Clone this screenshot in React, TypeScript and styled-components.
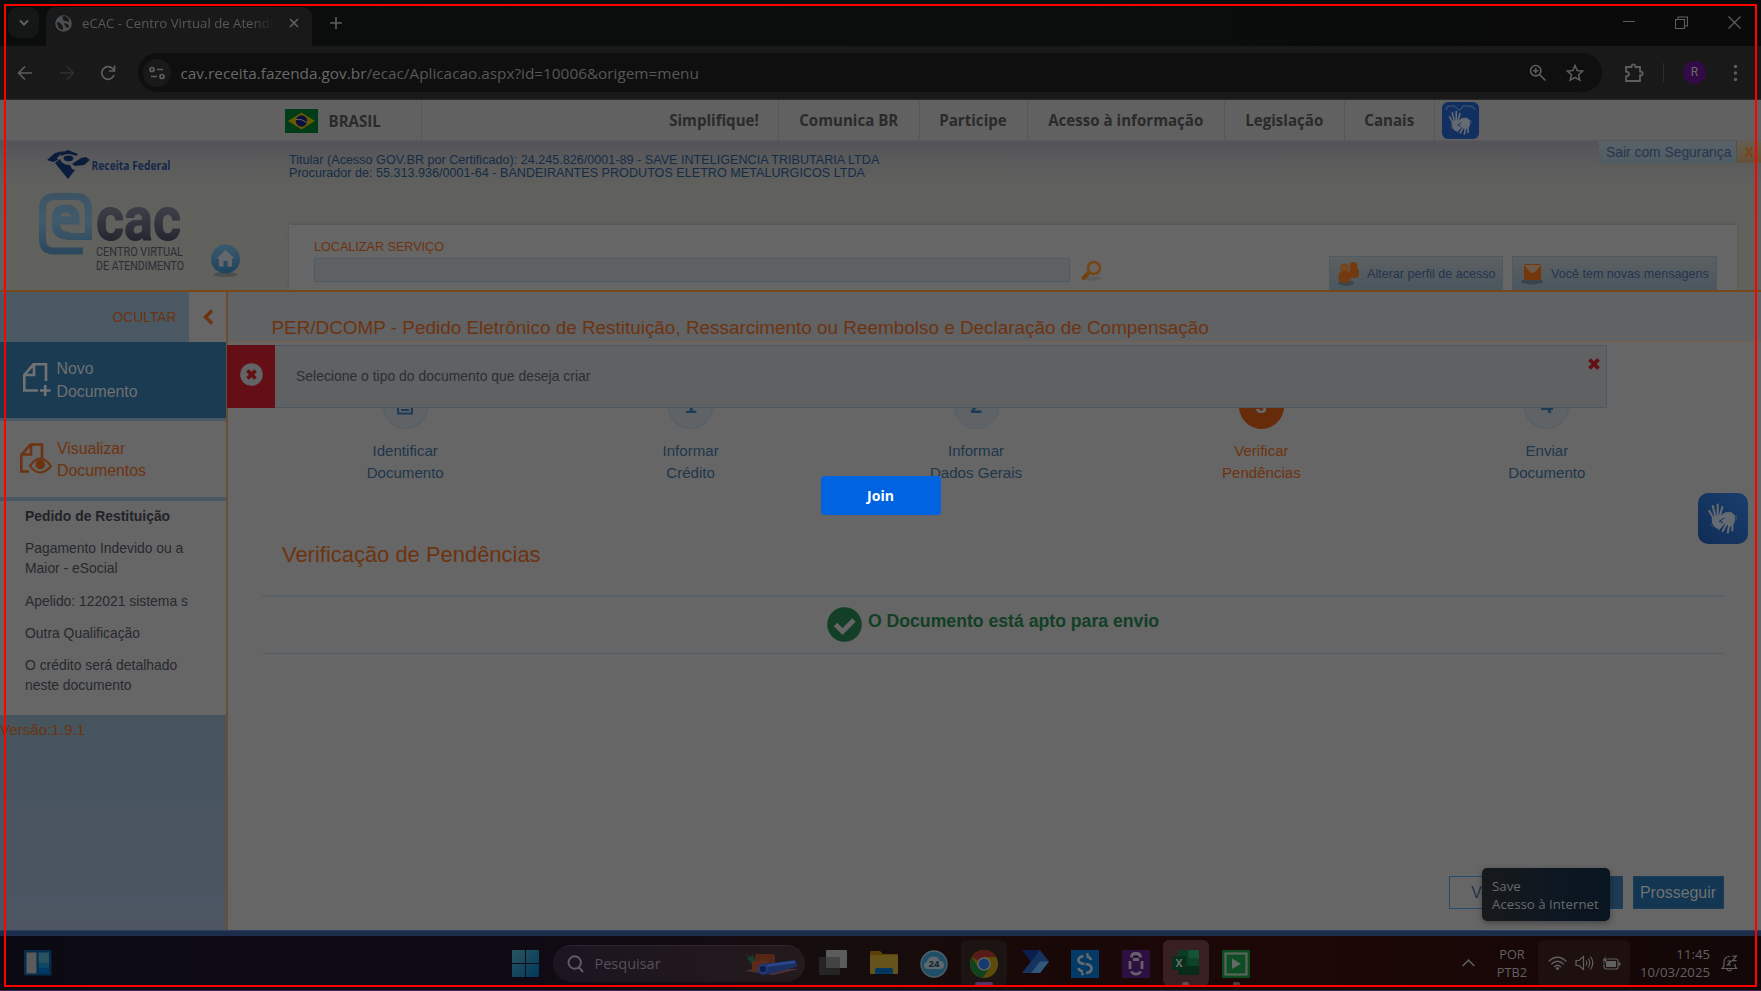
import React from "react";
import styled, { createGlobalStyle } from "styled-components";

const arial = `"Liberation Sans", Arial, sans-serif`;
const segoe = `"Open Sans", "Segoe UI", sans-serif`;
const orange = "#6d3310";

const GlobalStyle = createGlobalStyle`
  * { box-sizing: border-box; }
  body { margin: 0; background: #666; overflow: hidden; }
  p, h1, h2 { margin: 0; font-weight: normal; }
  button { font: inherit; margin: 0; padding: 0; border: 0; }
  svg { display: block; flex: none; }
`;

const Screen = styled.div`
  position: relative;
  width: 1761px;
  height: 991px;
  display: flex;
  flex-direction: column;
  overflow: hidden;
  font-family: ${arial};
  background: #666;
`;

/* ---------- browser ---------- */
const TitleBar = styled.div`
  height: 46px;
  flex: none;
  display: flex;
  align-items: flex-start;
  padding-left: 8px;
  background: linear-gradient(90deg, #0b0d0d, #0a0e0c 60%, #0a0a0b 90%);
`;
const TabMenu = styled.div`
  width: 31px;
  height: 31px;
  margin-top: 7px;
  border-radius: 10px;
  background: #151716;
  display: grid;
  place-items: center;
`;
const Tab = styled.div`
  width: 266px;
  height: 39px;
  margin: 7px 0 0 7px;
  padding: 0 0 7px 9px;
  border-radius: 10px 10px 0 0;
  background: #191919;
  display: flex;
  align-items: center;
`;
const TabTitle = styled.span`
  width: 192px;
  margin-left: 10px;
  overflow: hidden;
  white-space: nowrap;
  font: 13.2px/20px ${segoe};
  color: #585858;
  mask-image: linear-gradient(90deg, #000 88%, transparent);
`;
const TabAction = styled.div<{ $ml: number; $mt?: number }>`
  margin-left: ${(p) => p.$ml}px;
  margin-top: ${(p) => p.$mt ?? 0}px;
`;
const WindowControls = styled.div`
  margin: 16px 20px 0 auto;
  width: 118px;
  display: flex;
  justify-content: space-between;
  align-items: center;
`;
const Toolbar = styled.div`
  height: 54px;
  flex: none;
  display: flex;
  align-items: center;
  padding-left: 16px;
  background: #191919;
  border-bottom: 1px solid #2a2a2a;
`;
const NavIcons = styled.div`
  width: 122px;
  display: flex;
  gap: 23.5px;
`;
const Omnibox = styled.div`
  width: 1464px;
  height: 39px;
  border-radius: 20px;
  background: #0f0f0f;
  display: flex;
  align-items: center;
  padding: 0 18px 0 5px;
`;
const SiteInfo = styled.div`
  width: 28px;
  height: 28px;
  border-radius: 50%;
  background: #191919;
  display: grid;
  place-items: center;
`;
const Url = styled.span`
  margin-left: 9.5px;
  flex: 1;
  font: 15.33px/22px ${segoe};
  color: #575757;
  b { font-weight: 400; color: #686868; }
`;
const OmniActions = styled.div`
  display: flex;
  gap: 19px;
`;
const ToolbarEnd = styled.div`
  margin-left: 22px;
  display: flex;
  align-items: center;
`;
const Divider = styled.i`
  width: 1px;
  height: 19px;
  margin: 0 19px 0 19px;
  background: #2c2c2c;
`;
const Avatar = styled.span`
  width: 23px;
  height: 23px;
  border-radius: 50%;
  background: #320a45;
  color: #6a6a6a;
  font: 12px/23px Roboto, sans-serif;
  text-align: center;
  margin-right: 27px;
`;

/* ---------- gov bar ---------- */
const GovBar = styled.div`
  height: 41px;
  flex: none;
  display: flex;
  align-items: center;
  padding-left: 285px;
  background: #616161;
  border-bottom: 1px solid #5a5a5c;
  font: bold 15.1px/22px ${segoe};
  color: #2a2a2a;
`;
const GovBrand = styled.div`
  width: 137px;
  height: 40px;
  padding-top: 1px;
  display: flex;
  align-items: center;
  gap: 10.5px;
  border-right: 1px solid #55575a;
`;
const GovItem = styled.a<{ $w: number; $first?: boolean }>`
  width: ${(p) => p.$w}px;
  height: 40px;
  line-height: 40px;
  margin-left: ${(p) => (p.$first ? "auto" : 0)};
  text-align: center;
  border-right: 1px solid #55575a;
`;
const GovLibras = styled.div`
  width: 37px;
  height: 37px;
  margin: 0 282px 0 7px;
  border-radius: 6px;
  background: #12305f;
  display: grid;
  place-items: center;
`;

/* ---------- page header ---------- */
const Header = styled.header`
  height: 151px;
  flex: none;
  display: flex;
  background: linear-gradient(#545459, #5b5b5c 20px, #60605d 44px, #61615d);
  border-bottom: 2px solid #77481a;
`;
const Brand = styled.div`
  width: 289px;
  flex: none;
`;
const HeaderBody = styled.div`
  flex: 1;
  display: flex;
  flex-direction: column;
  justify-content: space-between;
`;
const HeaderTop = styled.div`
  display: flex;
  justify-content: space-between;
`;
const UserInfo = styled.p`
  padding-top: 13px;
  font-size: 12.62px;
  line-height: 12.9px;
  color: #152c47;
`;
const Logout = styled.div`
  display: flex;
  height: 22px;
  font-size: 13.85px;
  line-height: 23px;
  color: #26354f;
`;
const LogoutText = styled.span`
  width: 138px;
  padding-left: 7px;
  background: linear-gradient(#5a6268, #4f5b63);
  border-right: 1px solid #46525c;
`;
const LogoutX = styled.span`
  width: 24px;
  background: linear-gradient(#65604f, #665038);
  color: #7a4312;
  font-weight: bold;
  text-align: center;
`;
const SearchPanel = styled.div`
  width: 1448px;
  height: 65px;
  background: #666;
  box-shadow: 0 -1px 3px rgba(0, 0, 0, 0.12);
  display: flex;
  justify-content: space-between;
  align-items: flex-end;
  padding: 0 20px 0 25px;
`;
const SearchField = styled.label`
  display: block;
  height: 50px;
  font-size: 12.6px;
  line-height: 14px;
  padding-bottom: 8px;
  color: ${orange};
`;
const SearchRow = styled.div`
  display: flex;
  align-items: center;
  gap: 11px;
  margin-top: 4px;
`;
const SearchInput = styled.div`
  width: 755.5px;
  height: 24px;
  background: #606163;
  border: 1px solid #4d5963;
`;
const Shortcuts = styled.div`
  display: flex;
  gap: 9px;
`;
const Shortcut = styled.div<{ $w: number; $gap: number }>`
  width: ${(p) => p.$w}px;
  height: 34px;
  padding-left: 7px;
  display: flex;
  align-items: center;
  gap: ${(p) => p.$gap}px;
  background: linear-gradient(#5c6061, #4b565f);
  border: 1px solid #4d5a5f;
  border-bottom: 0;
  font-size: 12.57px;
  white-space: nowrap;
  color: #24344f;
`;

/* ---------- body ---------- */
const Body = styled.div`
  height: 638px;
  flex: none;
  display: flex;
`;
const Sidebar = styled.aside`
  width: 228px;
  flex: none;
  border-right: 2px solid #674e34;
  background: linear-gradient(#4a5963, #46545e 70%, #4d5563);
  display: flex;
  flex-direction: column;
`;
const HideRow = styled.div`
  height: 50px;
  display: flex;
  justify-content: flex-end;
  font-size: 13.82px;
  line-height: 50px;
  color: ${orange};
`;
const HideArrow = styled.div`
  width: 37px;
  margin-left: 12.5px;
  background: #666;
  display: grid;
  place-items: center;
`;
const MenuItem = styled.div<{ $primary?: boolean; $pl: number; $lh: number }>`
  height: 76px;
  display: flex;
  align-items: center;
  padding-left: ${(p) => p.$pl}px;
  background: ${(p) => (p.$primary ? "#1a3b52" : "#666")};
  color: ${(p) => (p.$primary ? "#6f7173" : orange)};
  font-size: 15.85px;
  line-height: ${(p) => p.$lh}px;
  span { padding: 2px 0 0 5.5px; }
`;
const Gap = styled.div<{ $h: number }>`
  height: ${(p) => p.$h}px;
`;
const Summary = styled.div`
  height: 214px;
  padding: 6px 0 0 25px;
  background: #666;
  font-size: 13.9px;
  line-height: 19.9px;
  color: #27292e;
  p { margin-bottom: 12.4px; }
  p.bold { font-weight: bold; color: #212329; }
`;
const Version = styled.p`
  padding-top: 6px;
  font-size: 15.15px;
  line-height: 17px;
  color: ${orange};
`;
const Main = styled.main`
  position: relative;
  flex: 1;
  background: #666;
`;
const PageTitle = styled.h1`
  height: 50px;
  padding: 21px 0 0 43.5px;
  font-size: 18.9px;
  line-height: 29px;
  color: ${orange};
  background: #616264;
  border-bottom: 1px solid #77604e;
`;
const Alert = styled.div`
  position: absolute;
  top: 53px;
  left: -1px;
  width: 1380px;
  height: 63px;
  display: flex;
  align-items: center;
  background: #5f6163;
  border: 1px solid #4d5860;
  font-size: 13.95px;
  color: #2c2e33;
`;
const AlertText = styled.span`
  padding-bottom: 2px;
`;
const AlertBadge = styled.div`
  width: 48px;
  height: 63px;
  margin: 0 21px 0 -1px;
  background: #630f15;
  display: grid;
  place-items: center;
  padding-bottom: 4px;
`;
const AlertClose = styled.div`
  margin: 0 6px 26px auto;
`;
const Steps = styled.ol`
  list-style: none;
  display: flex;
  width: 1427px;
  margin: 42px 0 0 34.5px;
  padding: 0;
`;
const Step = styled.li<{ $active?: boolean }>`
  flex: 1;
  display: flex;
  flex-direction: column;
  align-items: center;
  text-align: center;
  font-size: 15.07px;
  line-height: 22.2px;
  color: ${(p) => (p.$active ? orange : "#20364b")};
`;
const StepCircle = styled.span<{ $active?: boolean }>`
  width: 45px;
  height: 45px;
  margin-bottom: 11px;
  border-radius: 50%;
  display: grid;
  place-items: center;
  background: ${(p) => (p.$active ? "#662c09" : "#606366")};
  border: 1px solid ${(p) => (p.$active ? "#662c09" : "#545e68")};
  color: ${(p) => (p.$active ? "#686868" : "#1d3a56")};
  font-weight: bold;
  font-size: ${(p) => (p.$active ? 20 : 22)}px;
`;
const SectionTitle = styled.h2`
  margin: 56px 0 0 54px;
  font-size: 21.95px;
  line-height: 30px;
  color: ${orange};
`;
const Result = styled.div`
  width: 1462px;
  height: 59px;
  margin: 24.5px 0 0 34px;
  border-top: 2px solid #596066;
  border-bottom: 1px solid #515c66;
  display: flex;
  align-items: center;
  justify-content: center;
  gap: 6px;
  font-weight: bold;
  font-size: 17.65px;
  color: #123f25;
  svg { margin-bottom: 1px; }
  span { padding-bottom: 6px; }
`;
const FormActions = styled.div`
  display: flex;
  gap: 10px;
  margin: 222px 0 0 1220.5px;
`;
const FormButton = styled.button<{ $w: number; $kind: "outline" | "soft" | "solid" }>`
  width: ${(p) => p.$w}px;
  height: 33px;
  border: 1px solid ${(p) => (p.$kind === "outline" ? "#234c6e" : "#1c3d58")};
  background: ${(p) => ({ outline: "#666", soft: "#1e3a52", solid: "#133752" })[p.$kind]};
  color: ${(p) => (p.$kind === "outline" ? "#1f3350" : "#6f7173")};
  font: 15.9px/29px ${arial};
`;
const FloatingLibras = styled.div`
  position: absolute;
  left: 1698px;
  top: 493px;
  width: 50px;
  height: 51px;
  border-radius: 10px;
  background: linear-gradient(45deg, #0f2c55, #1a3e6d);
`;
const NetTooltip = styled.div`
  position: absolute;
  left: 1482px;
  top: 868px;
  width: 128px;
  height: 53px;
  padding: 9px 0 0 10px;
  border-radius: 5px;
  background: linear-gradient(90deg, #17191b, #0d1722 60%, #091521);
  box-shadow: 0 2px 6px rgba(0, 0, 0, 0.35);
  font: 13.25px/18.2px ${segoe};
  color: #686a6c;
  white-space: nowrap;
`;

/* ---------- taskbar ---------- */
const WindowEdge = styled.div`
  height: 6px;
  flex: none;
  background: #1b2d4b;
  border-top: 1px solid #2c4160;
`;
const Taskbar = styled.footer`
  height: 55px;
  flex: none;
  display: flex;
  align-items: center;
  padding: 0 23px 0 24px;
  border-bottom: 1px solid #38284c;
  background: linear-gradient(90deg, #0b0a12, #100a14 30%, #160d0d 48%, #1a0707 62%, #1b0806 78%, #120707);
  color: #636163;
  font-family: ${segoe};
`;
const TaskSearch = styled.div`
  width: 252px;
  height: 37px;
  margin: 0 3.5px 0 14px;
  padding: 0 6px 0 14px;
  border-radius: 19px;
  background: linear-gradient(90deg, #1c1420, #241a1c);
  border-top: 1px solid #2e2730;
  display: flex;
  align-items: center;
  font-size: 14.5px;
  color: #56505a;
  span { margin: 0 auto 0 11px; }
`;
const Slot = styled.div`
  width: 50.4px;
  display: flex;
  justify-content: center;
`;
const SlotBox = styled.div<{ $bg?: string }>`
  width: 46px;
  height: 46px;
  border-radius: 6px;
  background: ${(p) => p.$bg ?? "transparent"};
  display: flex;
  flex-direction: column;
  align-items: center;
  justify-content: space-between;
  padding-top: 9.5px;
`;
const Indicator = styled.i<{ $w: number; $c: string }>`
  width: ${(p) => p.$w}px;
  height: 4px;
  border-radius: 2px;
  background: ${(p) => p.$c};
`;
const Tray = styled.div`
  margin-left: auto;
  display: flex;
  align-items: center;
  font-size: 13px;
  line-height: 18.2px;
`;
const TrayText = styled.div<{ $w: number; $right?: boolean; $size: number }>`
  width: ${(p) => p.$w}px;
  text-align: ${(p) => (p.$right ? "right" : "center")};
  font-size: ${(p) => p.$size}px;
`;
const TrayGroup = styled.div`
  width: 92px;
  height: 46px;
  margin: 0 0 0 8px;
  border-radius: 6px;
  background: #1d100f;
  display: flex;
  align-items: center;
  justify-content: center;
  gap: 8px;
`;

/* ---------- session layer ---------- */
const SessionLayer = styled.div`
  position: absolute;
  inset: 4px;
  border: 2px solid #f00;
  display: flex;
  align-items: center;
  justify-content: center;
`;
const JoinButton = styled.button`
  width: 120px;
  height: 39px;
  border-radius: 4px;
  background: #0064e1;
  color: #fff;
  font: bold 14.1px/39px ${segoe};
`;

const Line = ({ w = 16, h = 16, d, c = "#5e5e5e", s = 1.6 }: { w?: number; h?: number; d: string; c?: string; s?: number }) => (
  <svg width={w} height={h} viewBox={`0 0 ${w} ${h}`} fill="none" stroke={c} strokeWidth={s}>
    <path d={d} />
  </svg>
);

const Hands = ({ size = 51, c = "#656b72" }: { size?: number; c?: string }) => (
  <svg width={size} height={size} viewBox="0 0 51 51" stroke={c} fill={c} strokeLinecap="round" strokeLinejoin="round">
    <path d="M14.5 25l4-2 4 4 3.5 1-4 6-4 1-3-4z" strokeWidth="1" />
    <path d="M16 26L11.3 18M17.5 24L14.8 13M19.7 24V11.5M21.5 24.5L24.3 14" fill="none" strokeWidth="2.1" />
    <path d="M22.5 23l5-3.3h6l3.3 3-.6 6.8-3.7 3.5-6-2.5-2-3.8-3-1z" strokeWidth="1" />
    <path d="M27 29l-6.3 7M29 30l-4.3 8M31.5 30.5L29.8 39.5M34.5 29.5L34.3 37.5M28 25.5l-6.5 1" fill="none" strokeWidth="2.1" />
    <path d="M38.2 22.5v4M13 31l2 2.5" fill="none" strokeWidth="0.8" opacity=".7" />
    <path d="M25.8 25.3l-4.5 3 3.500 1.500" fill="none" stroke="#12305c" strokeWidth="1" />
  </svg>
);

const GovHands = () => (
  <svg width="37" height="37" viewBox="0 0 37 37">
    <path d="M4 8q0-4 4-4h4.500l4 4 2.500-1 2-3h6q5 0 6 4" fill="none" stroke="#46597a" strokeWidth="1" />
    <g transform="translate(-1.500 .5) scale(.8)"><Hands /></g>
  </svg>
);

const BrandLogo = () => (
  <svg width="289" height="149" viewBox="0 141 289 149">
    <defs>
      <linearGradient id="at" gradientUnits="userSpaceOnUse" x1="0" y1="192" x2="0" y2="255">
        <stop offset="0" stopColor="#3b5263" />
        <stop offset=".45" stopColor="#415b6d" />
        <stop offset="1" stopColor="#2a465a" />
      </linearGradient>
      <linearGradient id="cac" x1="0" y1="0" x2="0" y2="1">
        <stop offset=".4" stopColor="#3b3d46" />
        <stop offset=".65" stopColor="#2e303a" />
        <stop offset=".85" stopColor="#1f212b" />
      </linearGradient>
      <linearGradient id="home" x1="0" y1="0" x2="0" y2="1">
        <stop offset="0" stopColor="#3b5a6e" />
        <stop offset="1" stopColor="#1f435c" />
      </linearGradient>
    </defs>
    <g fill="#0a1c3c">
      <path d="M47 160l8-7 9-2-4 4-3 3 1 2-5 2z" />
      <path d="M61 153l7-3 10 4-2 2q-8-4-15 0z" />
      <ellipse cx="68.5" cy="158.3" rx="4.8" ry="2.9" />
      <path d="M72 164l9-6 5-1 4 3-6 5-9 1z" />
      <path d="M55 163l5-4q2 6 10 6l2 4 3 1-7 9z" />
    </g>
    <text x="91.5" y="169.500" fontFamily="Open Sans" fontWeight="bold" fontSize="13" textLength="79" lengthAdjust="spacingAndGlyphs" fill="#15274a">Receita Federal</text>
    <g fill="none" stroke="url(#at)" strokeWidth="7">
      <path d="M83 251H54q-11.500 0-11.500-11.500V209q0-12.500 13-12.500H75q13.500 0 13.500 13V236.500H68" />
      <path d="M70 236q-14 0-14-11V219q0-10.500 10-10.500 9.500 0 9.500 10.500v1.500H58" strokeWidth="8" />
    </g>
    <text x="96" y="240" fontFamily="Roboto" fontWeight="bold" fontSize="62" textLength="85" lengthAdjust="spacingAndGlyphs" fill="url(#cac)" stroke="url(#cac)" strokeWidth="1" strokeLinejoin="round">cac</text>
    <text x="96" y="256" fontFamily="Roboto" fontSize="12.500" textLength="87" lengthAdjust="spacingAndGlyphs" fill="#2b2d36">CENTRO VIRTUAL</text>
    <text x="96" y="269.700" fontFamily="Roboto" fontSize="12.500" textLength="88" lengthAdjust="spacingAndGlyphs" fill="#2b2d36">DE ATENDIMENTO</text>
    <ellipse cx="225.500" cy="274.500" rx="12" ry="2.500" fill="#4c4d4d" />
    <circle cx="225.500" cy="259" r="14.500" fill="url(#home)" />
    <path d="M216.500 258.500l9-8.500 9 8.500h-2.500v8h-4.500v-5.500h-4v5.500h-4.500v-8z" fill="#64686b" />
  </svg>
);

const Flag = () => (
  <svg width="33" height="24" viewBox="0 0 33 24">
    <rect width="33" height="24" fill="#003c18" />
    <path d="M3 12L16.500 3.500 30 12 16.500 20.500z" fill="#665a00" />
    <circle cx="16.500" cy="12" r="5.700" fill="#0d0f40" />
    <path d="M11 10.500q6-1 11 3" stroke="#666" fill="none" />
  </svg>
);

const DocIcon = ({ eye }: { eye?: boolean }) =>
  eye ? (
    <svg width="32" height="32" viewBox="20 443 32 32" fill="none" stroke={orange} strokeWidth="2.600">
      <path d="M42 458V444.500H30.500L21.300 455v16.500H29M31 445v9.500h-8.500" />
      <path d="M30 466q10-15 21 0-11 13-21 0z" fill="#666" strokeWidth="2" />
      <circle cx="40.300" cy="464.500" r="4.800" fill={orange} stroke="none" />
    </svg>
  ) : (
    <svg width="28" height="36" viewBox="23 362 28 36" fill="none" stroke="#707274" strokeWidth="2.600">
      <path d="M46 381V364.300H33.500L24.300 375v15.500H38M34 365v10h-8.500M45.200 385v11M40 390.500h10.500" />
    </svg>
  );

const People = () => (
  <svg width="24" height="26" viewBox="0 0 24 26" fill="#723a0e">
    <ellipse cx="9" cy="22" rx="8" ry="3" fill="#3c454d" />
    <circle cx="16.500" cy="5" r="4" />
    <rect x="12" y="7" width="10" height="10" rx="4" />
    <circle cx="7.500" cy="7" r="4.500" fill="#7a4414" />
    <rect x="1.500" y="10" width="12" height="12" rx="5" />
    <circle cx="7" cy="6.500" r="2" fill="#66503c" />
  </svg>
);
const Mail = () => (
  <svg width="24" height="22" viewBox="0 0 24 22">
    <ellipse cx="12" cy="18.500" rx="11" ry="3" fill="#39444e" />
    <rect x="4" y="1" width="17" height="16" rx="1.500" fill="#74370b" />
    <path d="M4 2h17l-6 7q-2.500 2-5 0z" fill="#6b5a4a" />
  </svg>
);
const Magnifier = () => (
  <svg width="21" height="21" viewBox="0 0 21 21" fill="none">
    <ellipse cx="11" cy="18.500" rx="9" ry="2" fill="#5b5b5b" />
    <path d="M8 12.500L2.500 18" stroke="#74400f" strokeWidth="4" strokeLinecap="round" />
    <circle cx="13" cy="8" r="6" stroke="#744616" strokeWidth="2.500" fill="#6b635a" />
  </svg>
);

const StartIcon = () => (
  <svg width="27" height="27" viewBox="0 0 27 27">
    <defs>
      <linearGradient id="win" x1="0" y1="0" x2="1" y2="1">
        <stop offset="0" stopColor="#2c5560" />
        <stop offset="1" stopColor="#00385c" />
      </linearGradient>
    </defs>
    <path d="M0 1q0-1 1-1h12v13H0zM14 0h12q1 0 1 1v12H14zM0 14h13v13H1q-1 0-1-1zM14 14h13v12q0 1-1 1H14z" fill="url(#win)" />
  </svg>
);
const Yoga = () => (
  <svg width="54" height="24" viewBox="0 0 54 24">
    <path d="M0 19l10-3 44 1-26 6z" fill="#4a3038" />
    <path d="M1 2l5 3 2-3 1 5 3 1-1 4-7-1 2-2-5-2 3-1z" fill="#16402e" />
    <rect x="10" y="2" width="20" height="10" rx="2" fill="#552717" />
    <rect x="7" y="9" width="16" height="10" rx="2" fill="#5b2c1b" />
    <path d="M16 12l34-4q3 3 1 7l-32 8q-6 0-6-5 0-4 3-6z" fill="#1a2f63" />
    <path d="M22 13.500l28-3.500" stroke="#2a488a" strokeWidth="2.500" />
    <circle cx="18" cy="17" r="4" fill="#0e1c48" stroke="#2c4688" />
  </svg>
);
const TaskView = () => (
  <svg width="28" height="26" viewBox="0 0 28 26">
    <rect x="0" y="7" width="21" height="18" rx="1" fill="#252424" />
    <rect x="7" y="0" width="21" height="18" rx="1" fill="#5c5c5c" />
    <rect x="7" y="7" width="14" height="11" fill="#434343" />
  </svg>
);
const Folder = () => (
  <svg width="28" height="25" viewBox="0 0 28 25">
    <path d="M0 2q0-1 1-1h9l3 3h14q1 0 1 1v5H0z" fill="#5a3f06" />
    <rect y="5" width="28" height="19" rx="1" fill="#66521b" />
    <path d="M5 24v-4q0-2 2-2h14q2 0 2 2v4z" fill="#033a63" />
    <path d="M9 21h10" stroke="#02264a" />
  </svg>
);
const Cloud24 = () => (
  <svg width="28" height="28" viewBox="0 0 28 28">
    <circle cx="14" cy="14" r="13" fill="#1f4f66" stroke="#52626b" strokeWidth="1.300" />
    <path d="M8 19q-4 0-4-3.500Q4 12.500 7 12q.5-5 6-5.500 5-.5 6.500 4 4.500.500 4.500 4.500 0 4-4 4z" fill="#5f686c" />
    <text x="14" y="17" fontFamily="Open Sans" fontWeight="bold" fontSize="9.500" textAnchor="middle" fill="#15242d">24</text>
  </svg>
);
const ChromeIcon = () => (
  <svg width="28" height="28" viewBox="0 0 28 28">
    <circle cx="14" cy="14" r="14" fill="#5e4b0b" />
    <path d="M14 14L1.900 7A14 14 0 0 1 26.100 7H14z" fill="#591b17" />
    <path d="M1.900 7A14 14 0 0 0 12.500 27.900L20 17.500 14 14 8 17z" fill="#0f421d" />
    <circle cx="14" cy="14" r="6.800" fill="#666" />
    <circle cx="14" cy="14" r="5.400" fill="#153a70" />
  </svg>
);
const FlowIcon = () => (
  <svg width="28" height="24" viewBox="0 0 28 24">
    <path d="M1 0h18l9 11.500L19 23H1l9-11.500z" fill="#16335f" />
    <path d="M1 0h18L10 11.500z" fill="#0a1f4e" />
    <path d="M10 23l9-11.500h9L19 23z" fill="#31577c" />
  </svg>
);
const SIcon = () => (
  <svg width="28" height="28" viewBox="0 0 28 28" fill="none" stroke="#676b6e" strokeWidth="2.600">
    <rect width="28" height="28" fill="#033a66" stroke="none" />
    <path d="M12.500 6Q7 7 7.500 10.500q.5 3 6 3.500M14.500 14q6 .5 6 4.500T15 23M15.500 6.500q4 .5 4.500 3.500M12 21.500q-4-.5-4.500-3.500" />
    <circle cx="16.500" cy="4.500" r="1.400" fill="#676b6e" stroke="none" />
    <circle cx="11.500" cy="24" r="1.400" fill="#676b6e" stroke="none" />
  </svg>
);
const LockIcon = () => (
  <svg width="28" height="28" viewBox="0 0 28 28" fill="none" stroke="#686068" strokeWidth="2.800">
    <rect width="28" height="28" fill="#2d0f42" stroke="none" />
    <path d="M9.500 7.500Q9.500 3.500 14 3.500t4.500 4M8 11v8M20 11v8M9 21.500q2 2.500 5 2.500t5-2.500M11 9.500h6" />
  </svg>
);
const ExcelIcon = () => (
  <svg width="27" height="26" viewBox="0 0 27 26">
    <rect x="6" y="0" width="21" height="25" rx="1" fill="#0b3d22" />
    <rect x="16.500" y="0" width="10.500" height="8" fill="#145436" />
    <rect x="16.500" y="8" width="10.500" height="8" fill="#0d4428" />
    <rect x="6" y="16" width="21" height="9" fill="#082b19" />
    <rect x="0" y="6" width="14" height="14" rx="1" fill="#06301b" />
    <text x="7" y="16.500" fontFamily="Open Sans" fontWeight="bold" fontSize="10.500" textAnchor="middle" fill="#6d7070">X</text>
  </svg>
);
const PlayIcon = () => (
  <svg width="28" height="28" viewBox="0 0 28 28">
    <rect width="28" height="28" fill="#0c4a20" />
    <rect x="3.500" y="3.500" width="21" height="21" fill="#0e4c24" stroke="#5b655e" strokeWidth="2.200" />
    <path d="M10 8.500l9 5.200-9 5.300z" fill="#646a66" />
  </svg>
);
const Widgets = () => (
  <svg width="28" height="26" viewBox="0 0 28 26">
    <rect width="27.500" height="25.500" rx="1" fill="#052c4b" />
    <rect x="2.500" y="2.500" width="10" height="21" fill="#5b5b5d" />
    <rect x="14.500" y="2.500" width="10.500" height="11" fill="#295260" />
    <rect x="14.500" y="13.500" width="10.500" height="5" fill="#0d4766" />
    <rect x="14.500" y="18.500" width="10.500" height="5" fill="#00396a" />
  </svg>
);

const apps: { icon: React.ReactNode; bg?: string; bar?: [number, string] }[] = [
  { icon: <TaskView /> },
  { icon: <Folder /> },
  { icon: <Cloud24 /> },
  { icon: <ChromeIcon />, bg: "#1c1413", bar: [18, "#533468"] },
  { icon: <FlowIcon /> },
  { icon: <SIcon /> },
  { icon: <LockIcon /> },
  { icon: <ExcelIcon />, bg: "#381f22", bar: [7, "#6b4a4c"] },
  { icon: <PlayIcon />, bar: [7, "#484141"] },
];

const govItems: [string, number][] = [
  ["Simplifique!", 129],
  ["Comunica BR", 140.5],
  ["Participe", 108],
  ["Acesso à informação", 197.5],
  ["Legislação", 119.5],
  ["Canais", 90.5],
];

const steps: [React.ReactNode, string, string][] = [
  [<Line key="i" w={16} h={20} s={2.2} c="#1d3a56" d="M1 1H15V16.500H1ZM4 9H12M4 13H12" />, "Identificar", "Documento"],
  ["1", "Informar", "Crédito"],
  ["2", "Informar", "Dados Gerais"],
  ["3", "Verificar", "Pendências"],
  ["4", "Enviar", "Documento"],
];

export default function App() {
  return (
    <Screen>
      <GlobalStyle />
      <TitleBar>
        <TabMenu><Line w={10} h={8} s={2} d="M1 1.500L5 5.500L9 1.500" /></TabMenu>
        <Tab>
          <svg width="17" height="17" viewBox="0 0 17 17">
            <circle cx="8.500" cy="8.500" r="8.300" fill="#4b4f52" />
            <path d="M2 7q3 0 4 2t2 2v4Q2 14 2 7zM6 2q2 0 2 2t3 2l3 1q1-4-4-6zM9 8l4 1 1 3-2 1-2-2z" fill="#191919" />
          </svg>
          <TabTitle>eCAC - Centro Virtual de Atendimento</TabTitle>
          <TabAction $ml={14.5}><Line w={10} h={10} s={1.7} d="M1 1L9 9M9 1L1 9" /></TabAction>
        </Tab>
        <TabAction $ml={17.5} $mt={17}><Line w={12} h={12} s={1.6} d="M6 0V12M0 6H12" /></TabAction>
        <WindowControls>
          <Line w={12} h={12} s={1} d="M0 4.500H12" />
          <Line w={13} h={13} s={1.1} d="M.5 3.500H9.500V12.500H.5ZM3 3.500V1H12.500V10H9.500" />
          <Line w={13} h={13} s={1.2} d="M.5 .5L12.500 12.500M12.500 .5L.5 12.500" />
        </WindowControls>
      </TitleBar>
      <Toolbar>
        <NavIcons>
          <Line w={18} h={18} s={1.6} d="M16 9H3M9 2.500L2.500 9L9 15.500" />
          <Line w={18} h={18} s={1.6} c="#303030" d="M2 9H15M9 2.500L15.500 9L9 15.500" />
          <Line w={18} h={18} s={1.7} d="M15 11A6.300 6.300 0 1 1 13.500 4.500L15.500 6.500M15.500 1.500V7H10" />
        </NavIcons>
        <Omnibox>
          <SiteInfo>
            <Line w={16} h={14} s={1.7} d="M1 3.500a2 2 0 1 0 4 0a2 2 0 1 0 -4 0M8 3.500H14M2 10.500H8M11 10.500a2 2 0 1 0 4 0a2 2 0 1 0 -4 0" />
          </SiteInfo>
          <Url><b>cav.receita.fazenda.gov.br</b>/ecac/Aplicacao.aspx?id=10006&amp;origem=menu</Url>
          <OmniActions>
            <Line w={18} h={18} s={1.6} d="M1.500 6.700a5 5 0 1 0 10.400 0a5 5 0 1 0 -10.400 0M10.500 10.500L16.500 16.500M4 6.700H9.400M6.700 4V9.400" />
            <Line w={18} h={18} s={1.5} d="M9 1.500L11.200 6.600L16.700 7.100L12.500 10.700L13.800 16.200L9 13.300L4.200 16.200L5.500 10.700L1.300 7.100L6.800 6.600Z" />
          </OmniActions>
        </Omnibox>
        <ToolbarEnd>
          <Line w={20} h={20} s={1.8} d="M2 4H7.500Q7.500 1.300 9.500 1.300T11.500 4H16V8.500Q18.700 8.500 18.700 10.500T16 12.500V18H2V13.500Q5 13 5 11T2 8.500Z" />
          <Divider />
          <Avatar>R</Avatar>
          <svg width="5" height="18" viewBox="0 0 5 18" fill="#5e5e5e"><circle cx="2.500" cy="2.500" r="1.700" /><circle cx="2.500" cy="9" r="1.700" /><circle cx="2.500" cy="15.500" r="1.700" /></svg>
        </ToolbarEnd>
      </Toolbar>

      <GovBar>
        <GovBrand><Flag />BRASIL</GovBrand>
        {govItems.map(([t, w], i) => (
          <GovItem key={t} $w={w} $first={i === 0}>{t}</GovItem>
        ))}
        <GovLibras><GovHands /></GovLibras>
      </GovBar>

      <Header>
        <Brand><BrandLogo /></Brand>
        <HeaderBody>
          <HeaderTop>
            <UserInfo>
              Titular (Acesso GOV.BR por Certificado): 24.245.826/0001-89 - SAVE INTELIGENCIA TRIBUTARIA LTDA<br />
              Procurador de: 55.313.936/0001-64 - BANDEIRANTES PRODUTOS ELETRO METALURGICOS LTDA
            </UserInfo>
            <Logout><LogoutText>Sair com Segurança</LogoutText><LogoutX>X</LogoutX></Logout>
          </HeaderTop>
          <SearchPanel>
            <SearchField>
              LOCALIZAR SERVIÇO
              <SearchRow><SearchInput /><Magnifier /></SearchRow>
            </SearchField>
            <Shortcuts>
              <Shortcut $w={174} $gap={6}><People />Alterar perfil de acesso</Shortcut>
              <Shortcut $w={205} $gap={7}><Mail />Você tem novas mensagens</Shortcut>
            </Shortcuts>
          </SearchPanel>
        </HeaderBody>
      </Header>

      <Body>
        <Sidebar>
          <HideRow>
            OCULTAR
            <HideArrow><Line w={12} h={16} s={3.4} c={orange} d="M10 1.500L3.500 8L10 14.500" /></HideArrow>
          </HideRow>
          <MenuItem $primary $pl={23} $lh={22.7}><DocIcon /><span>Novo<br />Documento</span></MenuItem>
          <Gap $h={3} />
          <MenuItem $pl={19.5} $lh={22}><DocIcon eye /><span>Visualizar<br />Documentos</span></MenuItem>
          <Gap $h={4} />
          <Summary>
            <p className="bold">Pedido de Restituição</p>
            <p>Pagamento Indevido ou a<br />Maior - eSocial</p>
            <p>Apelido: 122021 sistema s</p>
            <p>Outra Qualificação</p>
            <p>O crédito será detalhado<br />neste documento</p>
          </Summary>
          <Version>Versão:1.9.1</Version>
        </Sidebar>
        <Main>
          <PageTitle>PER/DCOMP - Pedido Eletrônico de Restituição, Ressarcimento ou Reembolso e Declaração de Compensação</PageTitle>
          <Steps>
            {steps.map(([n, a, b], i) => (
              <Step key={i} $active={i === 3}>
                <StepCircle $active={i === 3}>{n}</StepCircle>
                {a}<br />{b}
              </Step>
            ))}
          </Steps>
          <SectionTitle>Verificação de Pendências</SectionTitle>
          <Result>
            <svg width="35" height="35" viewBox="0 0 35 35">
              <circle cx="17.500" cy="17.500" r="17.300" fill="#123f25" />
              <path d="M8.500 17.500l7 7L27 13" fill="none" stroke="#666" strokeWidth="5" />
            </svg>
            <span>O Documento está apto para envio</span>
          </Result>
          <FormActions>
            <FormButton $w={86} $kind="outline">Voltar</FormButton>
            <FormButton $w={78} $kind="soft" />
            <FormButton $w={91} $kind="solid">Prosseguir</FormButton>
          </FormActions>
          <Alert>
            <AlertBadge>
              <svg width="23" height="23" viewBox="0 0 23 23">
                <circle cx="11.500" cy="11.500" r="11.300" fill="#626466" />
                <path d="M7.500 7.500l8 8M15.500 7.500l-8 8" stroke="#630f15" strokeWidth="3.800" />
              </svg>
            </AlertBadge>
            <AlertText>Selecione o tipo do documento que deseja criar</AlertText>
            <AlertClose><Line w={12} h={12} s={3.8} c="#630f15" d="M1.500 1.500L10.500 10.500M10.500 1.500L1.500 10.500" /></AlertClose>
          </Alert>
        </Main>
      </Body>

      <WindowEdge />
      <Taskbar>
        <Widgets />
        <TabAction $ml={459.5}><StartIcon /></TabAction>
        <TaskSearch>
          <Line w={17} h={18} s={2} c="#605b63" d="M1.500 7.500a6 6 0 1 0 12.400 0a6 6 0 1 0 -12.400 0M11.700 12L16 17" />
          <span>Pesquisar</span>
          <Yoga />
        </TaskSearch>
        {apps.map((a, i) => (
          <Slot key={i}>
            <SlotBox $bg={a.bg}>
              {a.icon}
              {a.bar && <Indicator $w={a.bar[0]} $c={a.bar[1]} />}
            </SlotBox>
          </Slot>
        ))}
        <Tray>
          <Line w={13} h={8} s={1.6} d="M.7 7L6.500 1.200L12.300 7" />
          <TabAction $ml={19}><TrayText $w={36} $size={12.8}>POR<br />PTB2</TrayText></TabAction>
          <TrayGroup>
            <svg width="19" height="15" viewBox="0 0 19 15" fill="none" stroke="#606060" strokeWidth="1.300">
              <path d="M.7 5.500Q9.500-3 18.300 5.500M3.300 8.300Q9.500 2.300 15.700 8.300M6 11Q9.500 7.500 13 11" />
              <circle cx="9.500" cy="12.500" r="1.600" fill="#606060" stroke="none" />
            </svg>
            <svg width="19" height="16" viewBox="0 0 19 16" fill="none" stroke="#606060" strokeWidth="1.200">
              <path d="M1 5.500h3L8.500 1.500v13L4 10.500H1zM11 5.500q1.500 2.500 0 5M13.200 3.500q3 4.500 0 9M15.500 1.500q4.500 6.500 0 13" />
            </svg>
            <svg width="19" height="16" viewBox="0 0 19 16" fill="none" stroke="#606060" strokeWidth="1.200">
              <rect x="2" y="4" width="14" height="10" rx="2" />
              <rect x="4" y="6" width="10" height="6" fill="#606060" stroke="none" />
              <path d="M17.500 7.500v3" strokeWidth="2" />
              <path d="M4 0L0 6h2.500L1.500 10 6 4H3.500z" fill="#606060" stroke="#201312" strokeWidth=".6" />
            </svg>
          </TrayGroup>
          <TrayText $w={80} $right $size={13.2}>11:45<br />10/03/2025</TrayText>
          <TabAction $ml={11}>
            <svg width="17" height="17" viewBox="0 0 17 17" fill="none" stroke="#606060" strokeWidth="1.200">
              <path d="M9 1.500Q3 1.500 3 7v4l-2 2.500h14.500L14 11V9M6 14q1 2 2.300 2t2.300-2M6.500 6h3.500l-3.500 4h3.500M11.500 1.200h4l-4 4.500h4" />
            </svg>
          </TabAction>
        </Tray>
      </Taskbar>

      <FloatingLibras><Hands /></FloatingLibras>
      <NetTooltip>Save<br />Acesso à Internet</NetTooltip>
      <SessionLayer><JoinButton>Join</JoinButton></SessionLayer>
    </Screen>
  );
}
